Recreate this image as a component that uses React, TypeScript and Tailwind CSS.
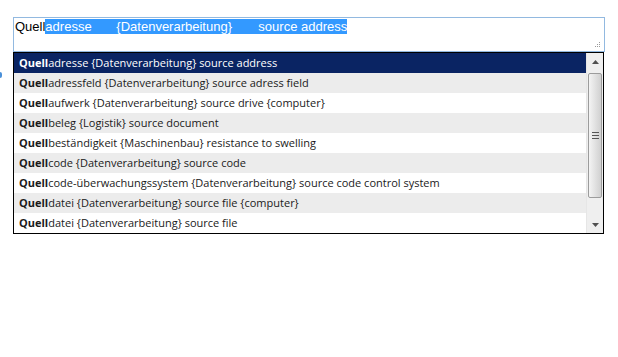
import React from "react";

const rows: { rest: string }[] = [
  { rest: "adresse {Datenverarbeitung} source address" },
  { rest: "adressfeld {Datenverarbeitung} source adress field" },
  { rest: "aufwerk {Datenverarbeitung} source drive {computer}" },
  { rest: "beleg {Logistik} source document" },
  { rest: "beständigkeit {Maschinenbau} resistance to swelling" },
  { rest: "code {Datenverarbeitung} source code" },
  { rest: "code-überwachungssystem {Datenverarbeitung} source code control system" },
  { rest: "datei {Datenverarbeitung} source file {computer}" },
  { rest: "datei {Datenverarbeitung} source file" },
];

function Grip() {
  const dots = [
    [6, 0],
    [4, 2],
    [6, 2],
    [2, 4],
    [4, 4],
    [6, 4],
  ];
  return (
    <svg width="8" height="6" viewBox="0 0 8 6" className="absolute right-[3px] bottom-[3px]">
      {dots.map(([x, y], i) => (
        <rect key={i} x={x} y={y} width="1" height="1" fill="#9a9a9a" />
      ))}
    </svg>
  );
}

export default function App() {
  return (
    <div className="relative w-[618px] h-[357px] bg-white pt-[17px] pl-[13px]">
      <div className="absolute left-0 top-[72px] w-[2px] h-[6px] rounded-r-full bg-[#4a90d9]" />
      <div
        className="relative w-[592px] h-[35px] border border-[#92b9e0] bg-white pt-[1px] pl-[1px]"
        style={{ fontFamily: '"Liberation Sans", Arial, sans-serif' }}
      >
        <div className="flex items-center h-[15px] text-[13px] leading-[15px] text-black whitespace-pre">
          <span>Quell</span>
          <span className="flex bg-[#3399ff] text-white">
            <span className="inline-block w-[71px]">adresse</span>
            <span className="inline-block w-[142px]">{"{Datenverarbeitung}"}</span>
            <span className="inline-block">source address</span>
          </span>
        </div>
        <Grip />
      </div>
      <div
        className="flex w-[591px] h-[182px] border border-black bg-white"
        style={{ fontFamily: '"Open Sans", "Noto Sans", sans-serif' }}
      >
        <div className="flex-1 flex flex-col">
          {rows.map((r, i) => {
            const sel = i === 0;
            const gray = i % 2 === 1;
            return (
              <div
                key={i}
                className={
                  "h-[20px] flex items-center pl-[5px] text-[11px] whitespace-nowrap " +
                  (sel ? "bg-[#0a2463] text-white" : gray ? "bg-[#ececec] text-[#1a1a1a]" : "bg-white text-[#1a1a1a]")
                }
              >
                <span className="font-bold">Quell</span>
                <span>{r.rest}</span>
              </div>
            );
          })}
        </div>
        <div className="w-[17px] flex flex-col bg-[#efefef] border-l border-[#e6e6e6]">
          <div className="h-[17px] flex items-center justify-center">
            <svg width="7" height="4" viewBox="0 0 7 4">
              <path d="M0 4 L3.5 0 L7 4 Z" fill="#505050" />
            </svg>
          </div>
          <div className="h-[3px]" />
          <div className="mx-[1px] h-[125px] rounded-[2px] border border-[#9c9c9c] bg-gradient-to-r from-[#f4f4f4] via-[#e2e2e2] to-[#d0d0d0] flex items-center justify-center">
            <svg width="7" height="7" viewBox="0 0 7 7">
              <rect x="0" y="0" width="7" height="1" fill="#555" />
              <rect x="0" y="3" width="7" height="1" fill="#555" />
              <rect x="0" y="6" width="7" height="1" fill="#555" />
            </svg>
          </div>
          <div className="flex-1" />
          <div className="h-[17px] flex items-center justify-center">
            <svg width="7" height="4" viewBox="0 0 7 4">
              <path d="M0 0 L7 0 L3.5 4 Z" fill="#505050" />
            </svg>
          </div>
        </div>
      </div>
    </div>
  );
}
